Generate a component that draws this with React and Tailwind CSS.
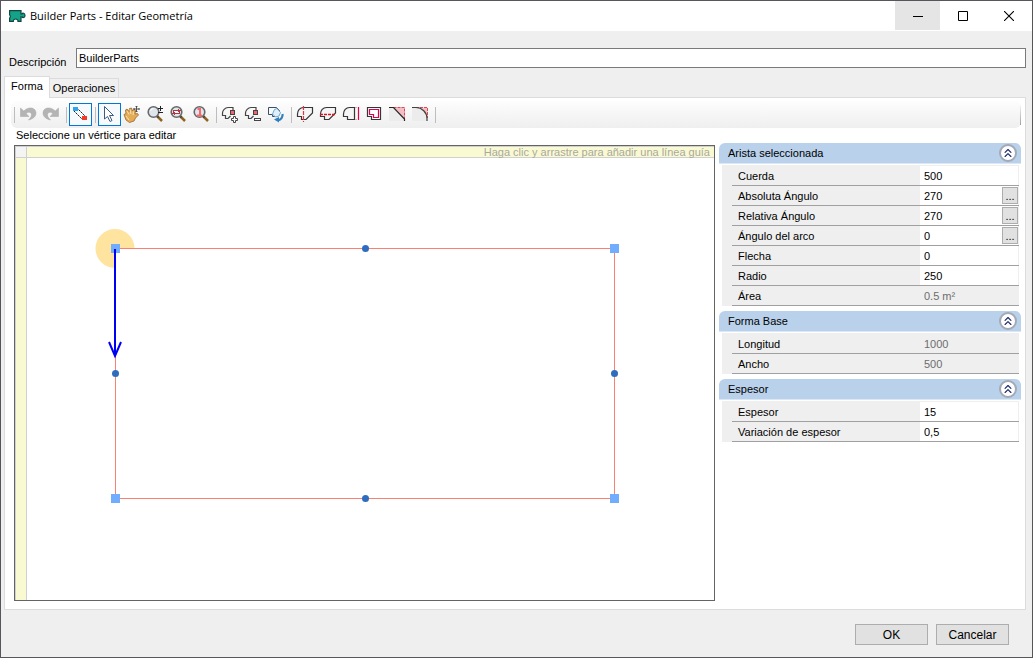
import { useState } from "react";
import clsx from "clsx";
import { ChevronsUp } from "lucide-react";

const svgProps = { width: 18, height: 18, viewBox: "0 0 18 18", fill: "none" };

const UndoIcon = () => (
  <svg {...svgProps}>
    <path d="M1.500 3v8.500h8.500L7.200 8.800c2-2.500 5.300-1.800 5.300 1 0 2.200-1.500 3.700-3 5.200 4.500-1 7.500-3.500 7.500-7C17 2.500 9.500 1 4.800 6z" fill="#b4b4b4" stroke="#a6a6a6" strokeWidth=".5" />
  </svg>
);

const RedoIcon = () => (
  <svg {...svgProps}>
    <path d="M16.500 3v8.500H8l2.800-2.700c-2-2.500-5.300-1.800-5.300 1 0 2.200 1.500 3.700 3 5.200C4 14 1 11.500 1 8 1 2.500 8.500 1 13.200 6z" fill="#b4b4b4" stroke="#a6a6a6" strokeWidth=".5" />
  </svg>
);

const SegmentIcon = () => (
  <svg {...svgProps}>
    <path d="M6 3l9 9M3 6l9 9" stroke="#222" strokeDasharray="2 .6" />
    <rect x="2" y="2" width="5" height="4" fill="#2aa4f4" />
    <rect x="11" y="11" width="5" height="4" fill="#f23a2c" />
  </svg>
);

const ArrowIcon = () => (
  <svg {...svgProps}>
    <path d="M4.500 1.500v12.500l3-2.500 2.500 5 2-1-2.500-5h4z" fill="#fff" stroke="#3f5a7c" />
  </svg>
);

const HandIcon = () => (
  <svg {...svgProps}>
    <path d="M1 9.500l2-1L2.500 5l1.500-1 2 2.500.500-3 2-.500 1 3 1.500-1.500 1.500 1-.500 3.500 2.500-.500 1 1.500-3 3-1.500 3-4.500 1.500L3 15z" fill="#e3ad58" stroke="#9a6524" strokeWidth=".8" />
    <path d="M4 6l2 3.500M7 4.500l1 4.500M10.500 6.500L10 10M3 11l3 4" stroke="#fbe3ae" />
    <path d="M13.500 1v6M10.500 4h6M12.500 2l1-1 1 1M12.500 6l1 1 1-1M11.500 3l-1 1 1 1M15.500 3l1 1-1 1" stroke="#444" strokeWidth=".9" />
  </svg>
);

const Lens = ({ children }) => (
  <svg {...svgProps}>
    <path d="M11 11l5 5" stroke="#91611f" strokeWidth="2.500" />
    <path d="M10.500 10.500l2 2" stroke="#444" strokeWidth="2" />
    <circle cx="7.500" cy="7" r="5.300" fill="#dfe6eb" stroke="#68686b" strokeWidth="1.600" />
    {children}
  </svg>
);

const ZoomIcon = () => (
  <Lens>
    <path d="M4.500 6a3 3 0 0 1 3-2.500" stroke="#fff" />
    <path d="M14.500 1v5M12 3.500h5M12 7.500h5" stroke="#222" />
  </Lens>
);

const ZoomWindowIcon = () => (
  <Lens>
    <rect x="4.500" y="5.500" width="6" height="3" fill="#fff" stroke="#b53640" />
    <path d="M3 8.500h3M9 5.500h3M9.500 4v3M5.500 7v3" stroke="#b53640" />
  </Lens>
);

const ZoomOneIcon = () => (
  <Lens>
    <path d="M5.500 4h2.500v6M5 10.500h5" stroke="#fb6768" strokeWidth="2" />
  </Lens>
);

const VertexShape = () => (
  <>
    <path d="M12 5V2.500H7c-3 0-5.500 3-5.500 5.500v2.500h3v3H7l2.500-2.500" stroke="#444" strokeWidth="1.200" />
    <rect x="9.500" y="5.500" width="4" height="4" fill="#f3636b" stroke="#444" />
  </>
);

const AddVertexIcon = () => (
  <svg {...svgProps}>
    <VertexShape />
    <path d="M12.500 11.500h2v2h2v2h-2v2h-2v-2h-2v-2h2z" fill="#fff" stroke="#444" />
  </svg>
);

const RemoveVertexIcon = () => (
  <svg {...svgProps}>
    <VertexShape />
    <rect x="10.500" y="13.500" width="6" height="2" fill="#fff" stroke="#444" />
  </svg>
);

const RotateShapeIcon = () => (
  <svg {...svgProps}>
    <path d="M1.500 2.500h8l3 3v3l-4 3h-3v-2h-4z" fill="#f6fafd" stroke="#3c4f66" />
    <path d="M7.500 4.500l2.500-1 3.500 4-1.500 3.500-3.500 1-3-3z" fill="#e2eff9" stroke="#6fa9d2" />
    <path d="M15.500 9c.500 3-1.500 6-4.500 6.500" stroke="#2f7fbd" strokeWidth="2.200" />
    <path d="M12 12v5.500L7 14.500z" fill="#2f7fbd" />
  </svg>
);

const SplitVerticalIcon = () => (
  <svg {...svgProps}>
    <path d="M1.500 11.500V9c0-3.500 2.500-6.500 6-6.500h9V8l-6.500 6.500H5.500v-3z" fill="#f5f5f7" stroke="#363636" strokeWidth="1.200" />
    <path d="M7.500 1v16" stroke="#e3343c" strokeWidth="1.200" strokeDasharray="4 1" />
  </svg>
);

const SplitHorizontalIcon = () => (
  <svg {...svgProps}>
    <path d="M1.500 11.500V9c0-3.500 2.500-6.500 6-6.500h9V8l-6.500 6.500H5.500v-3z" fill="#f5f5f7" stroke="#363636" strokeWidth="1.200" />
    <path d="M1 9.500h16" stroke="#dc1420" strokeWidth="1.600" strokeDasharray="3 1" />
  </svg>
);

const ExtendIcon = () => (
  <svg {...svgProps}>
    <path d="M12.500 2.500h-5c-3.500 0-6 3-6 6.500v2.500h4v3h7z" fill="#f5f5f7" stroke="#363636" strokeWidth="1.200" />
    <path d="M13 2.500h2M13 14.500h2" stroke="#f1a4ad" />
    <path d="M16.500 2v13" stroke="#de0051" strokeWidth="1.200" />
  </svg>
);

const OffsetIcon = () => (
  <svg {...svgProps}>
    <path d="M2.500 2.500h13v12h-9v-3h-4z" fill="#fff" stroke="#363636" strokeWidth="1.200" />
    <path d="M4.500 4.500h9v8h-5v-3h-4z" stroke="#de0051" strokeWidth="1.200" />
  </svg>
);

const ChamferIcon = () => (
  <svg {...svgProps}>
    <path d="M1 2h5l10 10v4H1z" fill="#ececed" />
    <path d="M5.500 2.500h11V14z" fill="#f4bfc4" />
    <path d="M5.500 2.500h11V14" stroke="#dc4a54" strokeDasharray="3 1" />
    <path d="M1 2.500h4.500L16.500 14v2" stroke="#262626" strokeWidth="1.200" />
  </svg>
);

const FilletIcon = () => (
  <svg {...svgProps}>
    <path d="M1 2h4c6 0 11 5 11 11v3H1z" fill="#ececed" />
    <path d="M5 2.500h11.500V14C16.500 7 11 2.500 5 2.500z" fill="#f4bfc4" />
    <path d="M5 2.500h11.500V13" stroke="#dc4a54" strokeDasharray="3 1" />
    <path d="M1 2.500h4c6 0 11 5 11 11V16" stroke="#414141" strokeWidth="1.200" />
  </svg>
);

const toolGroups = [
  [
    { name: "Deshacer", Icon: UndoIcon },
    { name: "Rehacer", Icon: RedoIcon },
  ],
  [{ name: "Aristas", Icon: SegmentIcon }],
  [
    { name: "Seleccionar", Icon: ArrowIcon },
    { name: "Mover", Icon: HandIcon },
    { name: "Zoom", Icon: ZoomIcon },
    { name: "Zoom ventana", Icon: ZoomWindowIcon },
    { name: "Zoom 1:1", Icon: ZoomOneIcon },
  ],
  [
    { name: "Añadir vértice", Icon: AddVertexIcon },
    { name: "Quitar vértice", Icon: RemoveVertexIcon },
    { name: "Girar", Icon: RotateShapeIcon },
  ],
  [
    { name: "Dividir vertical", Icon: SplitVerticalIcon },
    { name: "Dividir horizontal", Icon: SplitHorizontalIcon },
    { name: "Extender", Icon: ExtendIcon },
    { name: "Desfase", Icon: OffsetIcon },
    { name: "Chaflán", Icon: ChamferIcon },
    { name: "Redondeo", Icon: FilletIcon },
  ],
];

const sections = [
  {
    title: "Arista seleccionada",
    rows: [
      { label: "Cuerda", value: "500" },
      { label: "Absoluta Ángulo", value: "270", more: true },
      { label: "Relativa Ángulo", value: "270", more: true },
      { label: "Ángulo del arco", value: "0", more: true },
      { label: "Flecha", value: "0" },
      { label: "Radio", value: "250" },
      { label: "Área", value: "0.5 m²", readOnly: true },
    ],
  },
  {
    title: "Forma Base",
    rows: [
      { label: "Longitud", value: "1000", readOnly: true },
      { label: "Ancho", value: "500", readOnly: true },
    ],
  },
  {
    title: "Espesor",
    rows: [
      { label: "Espesor", value: "15" },
      { label: "Variación de espesor", value: "0,5" },
    ],
  },
];

function Separator() {
  return <div className="mr-px ml-[3px] h-4 w-[2px] border-l border-[#bdbdbd]" />;
}

function TitleBar() {
  return (
    <header className="flex h-[30px] items-start bg-white">
      <div className="flex h-full flex-1 items-center gap-1 pl-2">
        <svg width="17" height="14" viewBox="0 0 17 14">
          <path d="M.6 1.600h11.400v3.400h1c.500-1.200 3-1.200 3 1.400s-2.500 2.600-3 1.400h-1v4.600H9c.300-3.200-5-3.200-4.700 0H.6V9c1-.500 1-2.500 0-3z" fill="#12a389" stroke="#14453e" strokeWidth="1.200" />
        </svg>
        <h1 className="font-['Open_Sans',sans-serif] text-[11px] leading-4">
          Builder Parts - Editar Geometría
        </h1>
      </div>
      <button aria-label="Minimizar" className="flex h-[29px] w-[45px] items-center justify-center bg-[#e5e5e5]">
        <svg width="10" height="10" viewBox="0 0 10 10"><path d="M0 5.500h10" stroke="#000" /></svg>
      </button>
      <button aria-label="Maximizar" className="flex h-[29px] w-[46px] items-center justify-center">
        <svg width="10" height="10" viewBox="0 0 10 10"><path d="M.5.500h9v9h-9z" fill="none" stroke="#000" /></svg>
      </button>
      <button aria-label="Cerrar" className="flex h-[29px] w-[46px] items-center justify-center">
        <svg width="10" height="10" viewBox="0 0 10 10"><path d="M0 0l10 10M10 0L0 10" stroke="#000" strokeWidth="1.100" /></svg>
      </button>
    </header>
  );
}

function Toolbar({ tool, onSelect }) {
  return (
    <div className="flex h-[27px] items-center justify-between rounded-md bg-linear-to-b from-[#fdfdfd] to-[#efefef]">
      <div className="flex items-center">
        {toolGroups.map((group, i) => (
          <div key={i} className="flex items-center">
            <Separator />
            {group.map(({ name, Icon }) => (
              <button
                key={name}
                aria-label={name}
                onClick={() => onSelect(name)}
                className={clsx(
                  "flex h-[23px] w-[23px] items-center justify-center border pr-px pb-px",
                  name === tool || name === "Aristas"
                    ? "border-[#0078d7] bg-[#f7fafd]"
                    : "border-transparent"
                )}
              >
                <Icon />
              </button>
            ))}
          </div>
        ))}
        <Separator />
      </div>
      <div className="h-5 w-px bg-linear-to-b from-[#f5f5f5] to-[#a0a0a0]" />
    </div>
  );
}

function Canvas() {
  return (
    <div className="flex min-h-[440px] flex-1 flex-col border border-[#646464] bg-white">
      <div className="flex h-3 border-y border-[#d0d0d0]">
        <div className="w-3 border-x border-[#d0d0d0] bg-[#f4f4f4]" />
        <div className="flex flex-1 items-center justify-end bg-[#fafad2] pr-1 leading-[10px] whitespace-nowrap text-[#a9a9a0]">
          Haga clic y arrastre para añadir una línea guía
        </div>
      </div>
      <div className="flex flex-1">
        <div className="w-3 border-x border-[#d0d0d0] bg-[#fafad2]" />
        <svg className="h-[430px] flex-1" role="img" aria-label="Forma">
          <path d="M88 90.500v19.500a19.500 19.500 0 1 1 19.500-19.500z" fill="#ffe4a0" />
          <path d="M88.500 90.500h499v250h-499z" fill="none" stroke="#fa8072" />
          {[[88, 90], [587, 90], [88, 340], [587, 340]].map(([x, y]) => (
            <rect key={`${x}-${y}`} x={x - 4} y={y - 4} width="9" height="9" fill="#70adff" />
          ))}
          {[[338, 90], [88, 215], [587, 215], [338, 340]].map(([x, y]) => (
            <circle key={`${x}-${y}`} cx={x + 0.5} cy={y + 0.5} r="3.500" fill="#2e6cbe" />
          ))}
          <path d="M88 91v107M82 184l6 14 6-14" fill="none" stroke="#0000f5" strokeWidth="2" />
        </svg>
      </div>
    </div>
  );
}

function PropertyRow({ section, row }) {
  const [value, setValue] = useState(row.value);
  const id = `${section}-${row.label}`.replace(/\s+/g, "-").toLowerCase();

  return (
    <div className="ml-[10px] flex h-5 items-stretch border-b border-[#a0a0a0]">
      <label htmlFor={id} className="w-[188px] pl-[6px] leading-5">
        {row.label}
      </label>
      <div className={clsx("mr-px flex flex-1 items-center", !row.readOnly && "bg-white")}>
        <input
          id={id}
          value={value}
          readOnly={row.readOnly}
          onChange={(e) => setValue(e.target.value)}
          className={clsx(
            "h-full w-full min-w-0 flex-1 bg-transparent pl-1 outline-none",
            row.readOnly && "text-[#6d6d6d]"
          )}
        />
        {row.more && (
          <button
            aria-label={`Editar ${row.label}`}
            className="h-[17px] w-4 border border-[#adadad] bg-[#e1e1e1] leading-4"
          >
            ...
          </button>
        )}
      </div>
    </div>
  );
}

function Section({ title, rows }) {
  const [open, setOpen] = useState(true);

  return (
    <section>
      <div className="flex h-[21px] items-center justify-between rounded-t-md border-b border-[#dbe7f5] bg-[#b9d1ea] pr-1 pl-[9px]">
        <h2 className="leading-4">{title}</h2>
        <button
          aria-label={`Contraer ${title}`}
          onClick={() => setOpen(!open)}
          className="flex h-[18px] w-[18px] items-center justify-center rounded-full border-2 border-[#a3a9b5] bg-white"
        >
          <ChevronsUp size={14} strokeWidth={2} color="#1e2a6e" className={clsx(!open && "rotate-180")} />
        </button>
      </div>
      {open && (
        <div className="mt-px mr-[2px] ml-[3px] bg-[#efefef] pt-px">
          {rows.map((row) => (
            <PropertyRow key={row.label} section={title} row={row} />
          ))}
        </div>
      )}
    </section>
  );
}

export default function App() {
  const [description, setDescription] = useState("BuilderParts");
  const [tab, setTab] = useState("Forma");
  const [tool, setTool] = useState("Seleccionar");

  return (
    <div className="flex min-h-screen flex-col border border-[#57555c] bg-[#efefef] font-['Liberation_Sans',Arial,sans-serif] text-[11px] text-black">
      <TitleBar />
      <div className="flex items-center pt-[17px] pr-[6px] pl-2">
        <label htmlFor="descripcion" className="w-[67px] pt-[6px] leading-4">
          Descripción
        </label>
        <input
          id="descripcion"
          value={description}
          onChange={(e) => setDescription(e.target.value)}
          className="-mt-[2px] h-5 flex-1 border border-[#7a7a7a] bg-white px-[2px] outline-none"
        />
      </div>

      <main className="flex flex-1 flex-col px-[3px] pt-[6px] pr-[6px]">
        <div role="tablist" className="flex items-end">
          {["Forma", "Operaciones"].map((name) => (
            <button
              key={name}
              role="tab"
              aria-selected={tab === name}
              onClick={() => setTab(name)}
              className={clsx(
                "border border-b-0 border-[#dcdcdc]",
                tab === name
                  ? "z-10 -mb-px h-[22px] w-[46px] bg-white pb-[2px]"
                  : "h-[19px] w-[69px] border-l-0 bg-[#f0f0f0]"
              )}
            >
              {name}
            </button>
          ))}
        </div>
        <div className="flex flex-1 flex-col border border-[#dcdcdc] bg-white pt-[3px] pr-1 pb-2 pl-[6px]">
          <Toolbar tool={tool} onSelect={setTool} />
          <p className="h-[17px] pl-[5px] leading-[14px]">Seleccione un vértice para editar</p>
          <div className="flex flex-1 gap-1 pl-[3px]">
            <Canvas />
            <aside className="-mt-[2px] flex w-[302px] flex-col gap-[5px]">
              {sections.map((section) => (
                <Section key={section.title} {...section} />
              ))}
            </aside>
          </div>
        </div>
      </main>

      <footer className="flex justify-end gap-2 pt-[14px] pr-[23px] pb-3 text-[12px]">
        <button className="h-[21px] w-[73px] border border-[#adadad] bg-[#e1e1e1]">OK</button>
        <button className="h-[21px] w-[73px] border border-[#adadad] bg-[#e1e1e1]">Cancelar</button>
      </footer>
    </div>
  );
}
